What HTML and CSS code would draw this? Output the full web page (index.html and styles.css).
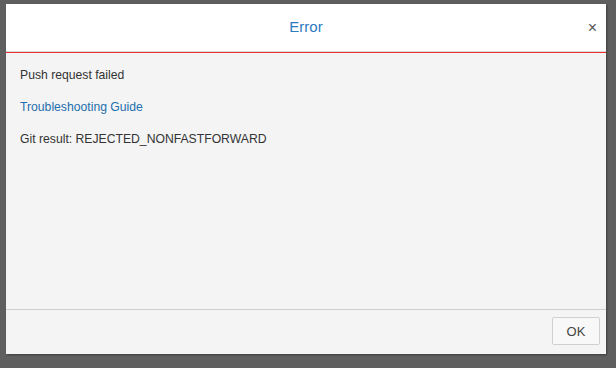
FILE: index.html
```html
<!DOCTYPE html>
<html lang="en">
<head>
    <meta charset="UTF-8">
    <meta name="viewport" content="width=device-width, initial-scale=1.0">
    <title>Error</title>
    <link rel="stylesheet" href="styles.css">
</head>
<body>
    <div class="dialog">
        <div class="dialog-header">
            <h1 class="dialog-title">Error</h1>
            <span class="dialog-close">&times;</span>
        </div>
        <div class="dialog-body">
            <p>Push request failed</p>
            <p><a href="#" class="link">Troubleshooting Guide</a></p>
            <p>Git result: REJECTED_NONFASTFORWARD</p>
        </div>
        <div class="dialog-footer">
            <button type="button" class="btn">OK</button>
        </div>
    </div>
</body>
</html>
```

FILE: styles.css
```css
body {
    margin: 0;
    padding: 4px 10px 14px 6px;
    background-color: #5f5f5f;
    font-family: 'Liberation Sans', Arial, sans-serif;
    font-size: 12.2px;
    color: #333;
}

.dialog {
    width: 600px;
    height: 350px;
    background-color: #f4f4f4;
    display: flex;
    flex-direction: column;
    box-shadow: 1px 1px 2px rgba(0, 0, 0, 0.35);
}

.dialog-header {
    position: relative;
    height: 47px;
    background-color: #fff;
    border-bottom: 1px solid #dcdcdc;
    display: flex;
    align-items: center;
    justify-content: center;
}

.dialog-title {
    margin: 0;
    font-size: 15px;
    font-weight: normal;
    color: #2b7bc1;
    padding-bottom: 2px;
}

.dialog-close {
    position: absolute;
    right: 9px;
    top: 15px;
    font-size: 16px;
    color: #555;
    cursor: pointer;
}

.dialog-body {
    flex: 1;
    border-top: 1px solid #e8302c;
    padding: 15px 14px 0;
}

.dialog-body p {
    margin: 0 0 17px;
    line-height: 15px;
}

.link {
    color: #1e6fae;
    text-decoration: none;
}

.dialog-footer {
    height: 45px;
    border-top: 1px solid #cfcfcf;
    display: flex;
    justify-content: flex-end;
    align-items: flex-start;
    padding: 7px 6px 0 0;
    box-sizing: border-box;
}

.btn {
    width: 48px;
    height: 28px;
    background-color: #f8f8f8;
    border: 1px solid #d0d0d0;
    border-radius: 2px;
    font-family: 'Liberation Sans', Arial, sans-serif;
    font-size: 13px;
    color: #444;
    cursor: pointer;
}
```
